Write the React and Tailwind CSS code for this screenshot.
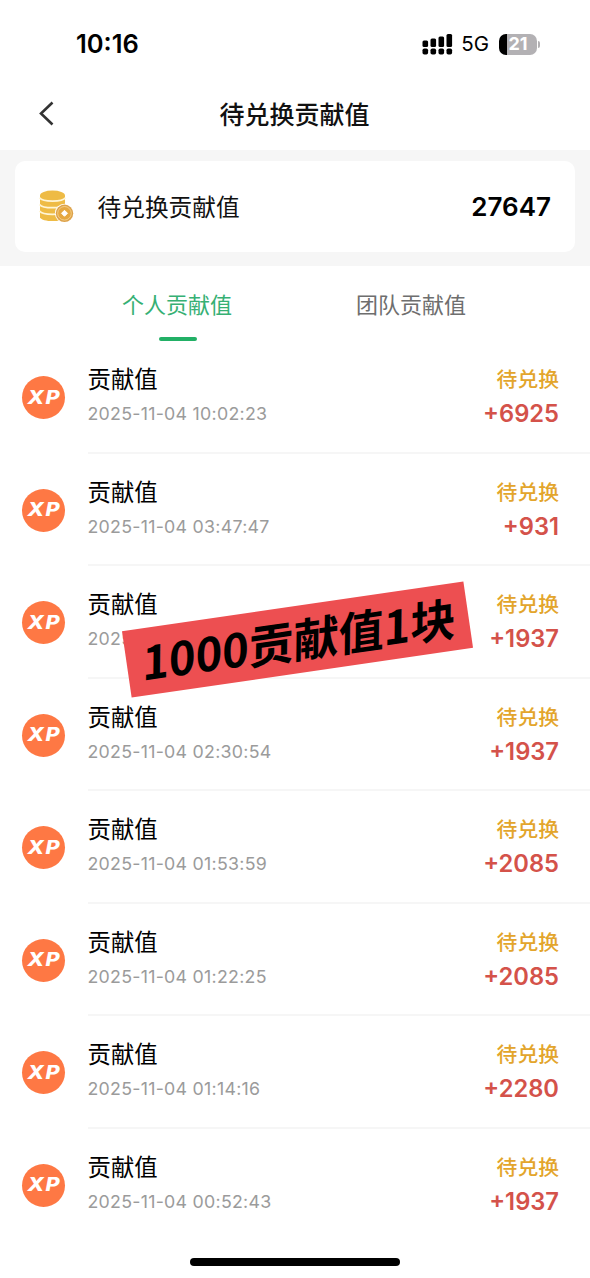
import { useState } from "react";

const TOTAL = 27647;

const TABS = ["个人贡献值", "团队贡献值"];

const RECORDS = [
  { date: "2025-11-04 10:02:23", amount: 6925 },
  { date: "2025-11-04 03:47:47", amount: 931 },
  { date: "2025-11-04 02:59:41", amount: 1937 },
  { date: "2025-11-04 02:30:54", amount: 1937 },
  { date: "2025-11-04 01:53:59", amount: 2085 },
  { date: "2025-11-04 01:22:25", amount: 2085 },
  { date: "2025-11-04 01:14:16", amount: 2280 },
  { date: "2025-11-04 00:52:43", amount: 1937 },
];

function SignalIcon() {
  return (
    <svg width="31" height="22" viewBox="0 0 31 22" fill="#000">
      <rect x="0.5" y="7.5" width="5.6" height="6.5" rx="1.5" />
      <rect x="8.5" y="5.5" width="5.6" height="8.5" rx="1.5" />
      <rect x="16.5" y="3.5" width="5.6" height="10.5" rx="1.5" />
      <rect x="24.5" y="1" width="5.6" height="13" rx="1.5" />
      <rect x="0.5" y="15.5" width="5.6" height="6" rx="1.8" />
      <rect x="8.5" y="15.5" width="5.6" height="6" rx="1.8" />
      <rect x="16.5" y="15.5" width="5.6" height="6" rx="1.8" />
      <rect x="24.5" y="15.5" width="5.6" height="6" rx="1.8" />
    </svg>
  );
}

function CoinsIcon() {
  return (
    <svg width="36" height="36" viewBox="0 0 36 36">
      {/* stack */}
      <path d="M1 6.5v21.7c2 5.2 23 5.2 25 0V6.5z" fill="#eebb45" />
      <ellipse cx="13.5" cy="6.5" rx="12.5" ry="5" fill="#eebb45" />
      <g fill="none" stroke="#fff5d6" strokeWidth="1.7">
        <path d="M0.5 8.8c3 4.4 23 4.4 26 0" />
        <path d="M0.5 15.4c3 4.4 23 4.4 26 0" />
        <path d="M0.5 22c3 4.4 23 4.4 26 0" />
      </g>
      {/* front coin */}
      <circle cx="25.5" cy="24.3" r="9.6" fill="#fff" />
      <circle cx="25.5" cy="24.3" r="8.7" fill="#dda24a" />
      <circle cx="25.5" cy="24.3" r="6.8" fill="#e6a840" stroke="#f6d595" strokeWidth="0.8" />
      <path d="M25.5 21.3l3 3-3 3-3-3z" fill="#fff" stroke="#fff" strokeLinejoin="round" />
    </svg>
  );
}

function Battery() {
  return (
    <div className="flex items-center">
      <div className="flex h-[21px] w-[38px] items-center justify-center rounded-[7px] bg-[linear-gradient(90deg,#000_8px,#b3b1b4_8px)]">
        <span className="text-[18px] font-bold leading-none text-white">21</span>
      </div>
      <div className="ml-px h-[7px] w-[2px] rounded-r-full bg-[#b3b1b4]" />
    </div>
  );
}

function RecordRow({ date, amount }) {
  return (
    <div className="group flex h-[112.5px] pl-[22px]">
      <div className="mt-[35px] flex h-[43px] w-[43px] shrink-0 items-center justify-center rounded-full bg-[#fe7844]">
        <span className="-mt-px ml-[2px] scale-x-[1.17] text-[18.5px] font-extrabold italic leading-none tracking-[1.2px] text-white">XP</span>
      </div>
      <div className="ml-[22.5px] flex flex-1 justify-between border-b-2 border-[#f6f6f6] pr-[31px] pt-[22px] group-last:border-transparent">
        <div>
          <p className="text-[23.4px] leading-[34px] text-black">贡献值</p>
          <p className="text-[17.8px] leading-[34px] tracking-[0.26px] text-[#9b9b9b]">{date}</p>
        </div>
        <div className="text-right">
          <p className="text-[20.8px] font-medium leading-[34px] text-[#e3a52c]">待兑换</p>
          <p className="text-[23.7px] font-semibold leading-[34px] text-[#d4524a]">+{amount}</p>
        </div>
      </div>
    </div>
  );
}

export default function App() {
  const [tab, setTab] = useState(0);

  return (
    <div className="relative h-[1278px] w-[590px] overflow-hidden bg-white font-['Inter','Noto_Sans_CJK_SC',sans-serif]">
      {/* status bar */}
      <div className="flex h-[88px] items-center justify-between pl-[76px] pr-[50px]">
        <span className="text-[25.5px] font-semibold leading-none text-black">10:16</span>
        <div className="flex items-center">
          <SignalIcon />
          <span className="ml-2 mr-[10px] text-[20.5px] leading-none text-black">5G</span>
          <Battery />
        </div>
      </div>

      {/* title bar */}
      <div className="grid h-[62px] grid-cols-[1fr_auto_1fr] items-center pb-[10px]">
        <button className="ml-[38px] w-fit">
          <svg width="16" height="26" viewBox="0 0 16 26" fill="none" stroke="#333" strokeWidth="2.6">
            <path d="M14.5 1.5L3 12.5L14.5 23.5" />
          </svg>
        </button>
        <h1 className="-ml-px mt-[2px] text-[25px] font-medium leading-none text-[#111]">待兑换贡献值</h1>
      </div>

      {/* total */}
      <div className="h-[116px] bg-[#f6f6f6] px-[15px] pt-[11px]">
        <div className="flex h-[91px] items-center rounded-[10px] bg-white pl-6 pr-6">
          <CoinsIcon />
          <span className="ml-[22.5px] mt-[3px] text-[23.7px] text-[#111]">待兑换贡献值</span>
          <span className="ml-auto text-[26px] font-semibold text-black">{TOTAL}</span>
        </div>
      </div>

      {/* tabs */}
      <div className="flex h-[75px] px-[60px]">
        {TABS.map((name, i) => (
          <button
            key={name}
            onClick={() => setTab(i)}
            className={`flex w-[234px] flex-col items-center pt-[23px] text-[22px] leading-[33px] ${
              tab === i ? "text-[#36b074]" : "text-[#6e6e6e]"
            }`}
          >
            {name}
            {tab === i && <span className="ml-px mt-[15px] h-[5px] w-[38px] rounded-full bg-[#22b066]" />}
          </button>
        ))}
      </div>

      {/* records */}
      <div>
        {RECORDS.map((r) => (
          <RecordRow key={r.date} date={r.date} amount={r.amount} />
        ))}
      </div>

      {/* sticker */}
      <div className="absolute left-[125px] top-[605.5px] flex h-[67px] w-[345px] -rotate-[8.3deg] items-center justify-center bg-[#ed4f51]">
        <span className="-mt-[2px] ml-[4px] -skew-x-[9deg] whitespace-nowrap font-['Noto_Sans_CJK_SC',sans-serif] text-[45.5px] font-bold leading-none text-black">
          1000贡献值1块
        </span>
      </div>

      {/* home indicator */}
      <div className="absolute left-[190px] top-[1258px] h-2 w-[210px] rounded-full bg-black" />
    </div>
  );
}
